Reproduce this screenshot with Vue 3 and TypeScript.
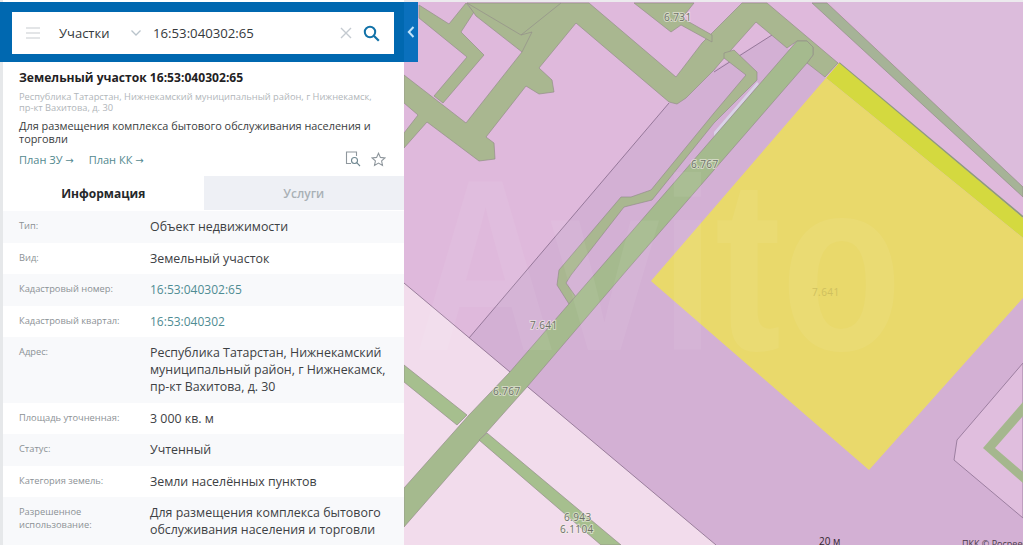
<script setup lang="ts">
interface InfoRow {
  label: string;
  value: string;
  link?: boolean;
}

const rows: InfoRow[] = [
  { label: 'Тип:', value: 'Объект недвижимости' },
  { label: 'Вид:', value: 'Земельный участок' },
  { label: 'Кадастровый номер:', value: '16:53:040302:65', link: true },
  { label: 'Кадастровый квартал:', value: '16:53:040302', link: true },
  { label: 'Адрес:', value: 'Республика Татарстан, Нижнекамский муниципальный район, г Нижнекамск, пр-кт Вахитова, д. 30' },
  { label: 'Площадь уточненная:', value: '3 000 кв. м' },
  { label: 'Статус:', value: 'Учтенный' },
  { label: 'Категория земель:', value: 'Земли населённых пунктов' },
  { label: 'Разрешенное использование:', value: 'Для размещения комплекса бытового обслуживания населения и торговли' },
];

// дорожная сеть, координаты в пикселях карты
const junction =
  '589,3 676,77 702,43 742,3 767,3 838,63 825,77 807,63 813,55 813,47 807,41 797,41 787,48 756,22 731,50 714,70 686,98 677,104 669,102 576,23 539,68 552,80 554,92 539,94 526,86 486,137 494,143 495,159 479,161 427,122 404,148 404,133 418,115 404,103 404,75 466,123 522,52 476,16 467,3';
const sideRoad =
  '724,53 734,50 757,72 757,80 714,123 652,200 624,207 571,275 566,283 576,297 569,304 557,285 559,270 621,197 631,197 651,190 714,113 746,75 724,58';
const mainRoad =
  '797,41 807,41 813,47 813,55 807,63 627,270 527,387 486,433 404,527 404,488 469,415 509,373';
</script>

<template>
  <div class="page">
    <svg class="map" viewBox="0 0 1023 545" width="1023" height="545">
      <rect width="1023" height="545" fill="#dfb9dc" />
      <polygon points="827,0 1023,0 1023,187" fill="#dcbcdc" />
      <!-- нижняя тёмная часть участка -->
      <polygon points="669,103 686,98 714,70 772,35 787,48 807,63 826,78 1023,238 1023,545 716,545 469,338" fill="#d3b0d4" />
      <polygon points="469,338 404,283 404,545 716,545" fill="#f2dcec" />
      <line x1="404" y1="283" x2="716" y2="545" stroke="#9a7f9c" stroke-width="1" />
      <line x1="669" y1="103" x2="469" y2="338" stroke="#96789a" stroke-width="1" />
      <line x1="772" y1="35" x2="714" y2="72" stroke="#96789a" stroke-width="1" />

      <!-- контур справа внизу -->
      <polygon points="1023,363 957,440 954,460 1023,518" fill="#e0bede" stroke="#9c7fa0" stroke-width="1" />
      <polygon points="1023,402 983,448 1023,483 1023,472 995,448 1023,416" fill="#a5b78e" />

      <g fill="#a9b790" stroke="#948f8a" stroke-width=".7">
        <polygon points="419,5 449,24 466,3 474,12 461,32 484,55 443,103 434,96 467,57 419,18" />
        <polygon :points="junction" />
        <polygon points="634,3 694,3 682,18 712,35 712,42 681,25 671,32" />
        <polygon points="812,3 827,3 1023,187 1023,197" fill="#a6b397" />
        <polygon :points="sideRoad" />
        <polygon points="757,82 714,132 714,137 759,84" fill="#d9d2e6" stroke="none" />
        <polygon :points="mainRoad" fill="#a5ba8e" />
        <polygon points="404,365 467,415 457,425 404,382" fill="#a6bf8e" />
        <polygon points="479,440 487,433 621,545 601,545" fill="#a6bf8e" />
        <path d="M467 3 L521 35 L561 3 M521 35 L532 32 L522 52" fill="none" />
      </g>
      <line x1="839" y1="63" x2="1023" y2="217" stroke="#8f9a80" stroke-width="2" />
      <polygon points="839,63 1023,218 1023,238 826,78" fill="#d4d93f" />
      <polygon points="826,78 1023,238 1023,298 869,470 651,281" fill="#e9d96b" />

      <!-- водяной знак -->
      <text class="watermark" x="414" y="350" textLength="488" lengthAdjust="spacingAndGlyphs">Avito</text>

      <g class="map-labels">
        <text x="664" y="21">6.731</text>
        <text x="691" y="168">6.767</text>
        <text x="530" y="329">7.641</text>
        <text x="493" y="395">6.767</text>
        <text x="564" y="521">6.943</text>
        <text x="560" y="533">6.1104</text>
        <text x="812" y="296" class="on-yellow">7.641</text>
      </g>
      <text class="scale" x="819" y="545">20 м</text>
      <text class="credit" x="962" y="547">ПКК © Росреестр</text>
      <rect width="1023" height="2" fill="#eceaee" />
    </svg>

    <aside class="panel">
      <header class="search-bar">
        <div class="search-box">
          <span class="burger"><i></i><i></i><i></i></span>
          <span class="search-type">Участки</span>
          <svg class="chevron" width="12" height="8" viewBox="0 0 12 8">
            <path d="M1.5 1.5 6 6l4.500-4.500" fill="none" stroke="#b9c3cb" stroke-width="1.300" />
          </svg>
          <span class="search-value">16:53:040302:65</span>
          <svg class="clear" width="12" height="12" viewBox="0 0 12 12">
            <path d="M1 1l10 10M11 1 1 11" fill="none" stroke="#c4cad0" stroke-width="1.400" />
          </svg>
          <svg class="loupe" width="17" height="17" viewBox="0 0 17 17">
            <circle cx="7" cy="7" r="5.200" fill="none" stroke="#1272a8" stroke-width="2" />
            <path d="M11 11l4.800 4.800" stroke="#1272a8" stroke-width="2.200" />
          </svg>
        </div>
        <button class="collapse" type="button">
          <svg width="8" height="12" viewBox="0 0 8 12">
            <path d="M6.500 1 1.800 6l4.700 5" fill="none" stroke="#bfe3fb" stroke-width="2" />
          </svg>
        </button>
      </header>

      <section class="summary">
        <h1>Земельный участок 16:53:040302:65</h1>
        <p class="address">Республика Татарстан, Нижнекамский муниципальный район, г Нижнекамск, пр-кт Вахитова, д. 30</p>
        <p class="purpose">Для размещения комплекса бытового обслуживания населения и торговли</p>
        <div class="links">
          <a>План ЗУ <span class="arrow">→</span></a>
          <a>План КК <span class="arrow">→</span></a>
          <span class="actions">
            <svg width="17" height="16" viewBox="0 0 17 16" fill="none" stroke="#8f979d" stroke-width="1.100">
              <path d="M6 12.500H1.500V1h10v4" />
              <circle cx="9.500" cy="9.500" r="3" stroke="#6f8790" />
              <path d="M11.700 11.700 15 15" stroke="#6f8790" />
            </svg>
            <svg width="15" height="15" viewBox="0 0 15 15" fill="none" stroke="#8f979d" stroke-width="1.100">
              <path d="M7.500 1.200 9.400 5.400l4.500.5-3.300 3 .9 4.500-4-2.300-4 2.300.9-4.500-3.300-3 4.500-.5z" />
            </svg>
          </span>
        </div>
      </section>

      <nav class="tabs">
        <div class="tab active">Информация</div>
        <div class="tab">Услуги</div>
      </nav>

      <dl class="info">
        <div v-for="row in rows" :key="row.label" class="info-row">
          <dt>{{ row.label }}</dt>
          <dd :class="{ link: row.link }">{{ row.value }}</dd>
        </div>
      </dl>
    </aside>
  </div>
</template>

<style>
html,
body {
  margin: 0;
  overflow: hidden;
}
</style>

<style scoped>
.page {
  position: relative;
  width: 1023px;
  height: 545px;
  overflow: hidden;
  background: #fff;
  font-family: "Open Sans", "Noto Sans", sans-serif;
  color: #35393c;
}

.map {
  position: absolute;
  top: 0;
  left: 0;
}

.watermark {
  font-family: "Liberation Sans", sans-serif;
  font-weight: 700;
  font-size: 245px;
  fill: #fff;
  fill-opacity: 0.06;
}

.map-labels text {
  font-family: "Open Sans", sans-serif;
  font-size: 10px;
  letter-spacing: 0.4px;
  fill: #6e7268;
  stroke: #f2efe8;
  stroke-width: 2px;
  paint-order: stroke;
  stroke-opacity: 0.6;
}

.map-labels text.on-yellow {
  fill: #cfc05e;
  stroke: none;
}

.scale {
  font-family: "Open Sans", sans-serif;
  font-size: 10px;
  fill: #33262f;
}

.credit {
  font-family: "Open Sans", sans-serif;
  font-size: 9px;
  fill: #4a3b48;
}

.panel {
  position: relative;
  display: flex;
  flex-direction: column;
  width: 404px;
  height: 545px;
  background: #fff;
  box-shadow: inset 3px 0 0 #e6e8ea;
}

.search-bar {
  position: relative;
  flex: none;
  height: 60px;
  margin-top: 2px;
  padding: 10px 10px 8px 12px;
  box-sizing: border-box;
  background: #0068b0;
}

.search-box {
  display: flex;
  align-items: center;
  height: 42px;
  background: #fff;
  font-size: 13px;
}

.burger {
  display: flex;
  flex-direction: column;
  gap: 3px;
  width: 14px;
  margin-left: 14px;
}

.burger i {
  display: block;
  height: 2px;
  background: #e3e5e7;
}

.search-type {
  margin-left: 19px;
  width: 71px;
}

.chevron {
  margin-right: 11px;
}

.search-value {
  flex: 1;
  font-size: 13.200px;
}

.clear {
  margin-right: 11px;
}

.loupe {
  margin-right: 14px;
}

.collapse {
  position: absolute;
  top: 0;
  left: 404px;
  width: 14px;
  height: 60px;
  padding: 0;
  border: 0;
  background: #0a70bd;
  display: flex;
  align-items: center;
  justify-content: center;
}

.summary {
  flex: none;
  height: 114px;
  padding: 7px 12px 0 19px;
  box-sizing: border-box;
}

.summary h1 {
  margin: 0;
  font-size: 12.100px;
  line-height: 17px;
  font-weight: 700;
  color: #1f2224;
}

.address {
  max-width: 358px;
  margin: 5px 0 0;
  font-size: 9.300px;
  line-height: 11px;
  color: #b1b6ba;
}

.purpose {
  margin: 6px 0 0;
  font-size: 10.900px;
  line-height: 13px;
  color: #3a3d40;
}

.links {
  display: flex;
  align-items: center;
  gap: 15px;
  margin-top: 6px;
  padding-right: 6px;
  font-size: 11px;
  color: #53898f;
}

.arrow {
  font-family: "DejaVu Sans", sans-serif;
  font-size: 10px;
}

.actions {
  display: flex;
  align-items: center;
  gap: 9px;
  margin-left: auto;
}

.tabs {
  flex: none;
  display: flex;
  height: 34px;
  margin-left: 3px;
}

.tab {
  flex: 1;
  display: flex;
  align-items: center;
  justify-content: center;
  font-size: 12px;
  font-weight: 600;
  color: #a9b0b5;
  background: #eef0f5;
}

.tab.active {
  color: #25282a;
  font-weight: 700;
  background: #fff;
}

.info {
  margin: 1px 0 0 3px;
}

.info-row {
  display: grid;
  grid-template-columns: 131px 1fr;
  padding: 7px 10px 7.500px 16px;
  background: #fff;
}

.info-row:nth-child(odd) {
  background: #f8f9fb;
}

.info-row dt {
  padding-top: 2px;
  font-size: 9.300px;
  line-height: 12.500px;
  color: #8b9195;
}

.info-row dd {
  margin: 0;
  font-size: 12.400px;
  line-height: 17px;
  color: #3d4144;
}

.info-row dd.link {
  color: #4f8c93;
  font-size: 12px;
}
</style>
